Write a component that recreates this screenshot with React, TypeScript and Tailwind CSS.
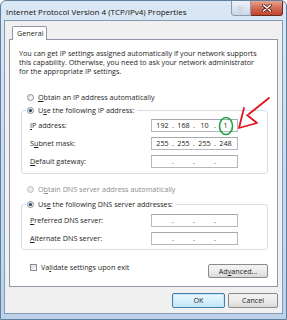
import React from "react";

const font = { fontFamily: '"Open Sans", "Noto Sans", "Liberation Sans", sans-serif' };

function Radio({ checked, disabled }: { checked?: boolean; disabled?: boolean }) {
  return (
    <span
      className={
        "inline-flex h-[7px] w-[7px] shrink-0 items-center justify-center rounded-full border bg-gradient-to-br " +
        (disabled ? "border-[#bcbcbc] from-[#f4f4f4] to-[#e6e6e6]" : "border-[#8a8c8f] from-[#e6e6e6] to-[#fbfbfb]")
      }
    >
      {checked && <span className="h-[3px] w-[3px] rounded-full bg-[#1d3c63]" />}
    </span>
  );
}

function IpBox({ value }: { value?: string[] }) {
  const parts = value ?? ["", "", "", ""];
  return (
    <div className="flex h-[13px] w-[87px] items-center border border-[#b3b9c1] border-t-[#a4a9b0] bg-white pl-[2px] text-[7.2px] leading-none text-[#222]">
      {parts.map((p, i) => (
        <React.Fragment key={i}>
          <span className="w-[17px] text-center">{p}</span>
          {i < 3 && <span className="w-[4px] text-center">.</span>}
        </React.Fragment>
      ))}
    </div>
  );
}

function Row({ label, u, rest, value }: { label: string; u: string; rest: string; value?: string[] }) {
  return (
    <div className="flex items-center pl-[2px]">
      <span className="w-[121px]">
        {label}
        <span className="underline decoration-[0.5px] underline-offset-[1px]">{u}</span>
        {rest}
      </span>
      <IpBox value={value} />
    </div>
  );
}

const U = ({ c }: { c: string }) => <span className="underline decoration-[0.5px] underline-offset-[1px]">{c}</span>;

export default function App() {
  return (
    <div
      className="relative flex h-[320px] w-[287px] flex-col overflow-hidden rounded-t-[6px] border border-[#60809f] bg-gradient-to-b from-[#dbe7f4] via-[#c9dbef] to-[#bcd2ea] px-[3px] pb-[5px] text-[7.2px] leading-[9px] text-[#1e1e1e]"
      style={font}
    >
      {/* title bar */}
      <div className="flex h-[19px] items-start justify-between">
        <div className="pl-[2px] pt-[6px] text-[8px] leading-[10px] text-[#111]">
          Internet Protocol Version 4 (TCP/IPv4) Properties
        </div>
        <div className="-mt-[1px] flex">
          <div className="flex h-[16px] w-[20px] items-center justify-center rounded-bl-[3px] border border-[#8b9bb0] bg-gradient-to-b from-[#eef3f9] to-[#c9d6e5] text-[8px] font-bold text-[#f7f9fc] [text-shadow:0_0_1px_#5a6a80]">
            ?
          </div>
          <div className="flex h-[16px] w-[32px] items-center justify-center rounded-br-[3px] border border-l-0 border-[#6b2a20] bg-gradient-to-b from-[#e9a393] via-[#d26a55] to-[#c2432c]">
            <svg width="10" height="8" viewBox="0 0 10 8">
              <path d="M1.5 1 L8.5 7 M8.5 1 L1.5 7" stroke="#4a1a12" strokeWidth="3" strokeLinecap="round" />
              <path d="M1.5 1 L8.5 7 M8.5 1 L1.5 7" stroke="#ffffff" strokeWidth="1.6" strokeLinecap="round" />
            </svg>
          </div>
        </div>
      </div>

      {/* client area */}
      <div className="flex flex-1 flex-col border border-[#8399b3] bg-[#f0f0f0] px-[4px] pb-[5px] pt-[5px]">
        <div className="flex h-[13px] pl-[3px]">
          <div className="relative z-10 h-[14px] w-[35px] rounded-t-[2px] border border-b-0 border-[#8e97a3] bg-white pl-[4px] pt-[2px] leading-[9px]">
            General
          </div>
        </div>
        <div className="flex flex-1 flex-col border border-[#8e97a3] bg-white px-[9px] pt-[9px]">
          <p>
            You can get IP settings assigned automatically if your network supports
            <br />
            this capability. Otherwise, you need to ask your network administrator
            <br />
            for the appropriate IP settings.
          </p>

          <div className="mt-[16px] flex h-[10px] items-center gap-[4px] pl-[8px]">
            <Radio />
            <span>
              <U c="O" />btain an IP address automatically
            </span>
          </div>

          <fieldset className="ml-[2px] mt-[3px] rounded-[3px] border border-[#d5dde6] pb-[5px] pl-[4px] pr-[4px]">
            <legend className="px-[1px]">
              <span className="flex h-[10px] items-center gap-[4px] pr-[2px]">
                <Radio checked />
                <span>
                  U<U c="s" />e the following IP address:
                </span>
              </span>
            </legend>
            <div className="ml-[2px] flex flex-col gap-[5px] pt-[4px]">
              <Row label="" u="I" rest="P address:" value={["192", "168", "10", "1"]} />
              <Row label="S" u="u" rest="bnet mask:" value={["255", "255", "255", "248"]} />
              <Row label="" u="D" rest="efault gateway:" />
            </div>
          </fieldset>

          <div className="mt-[10px] flex h-[10px] items-center gap-[4px] pl-[8px] text-[#8d8d8d]">
            <Radio disabled />
            <span>
              O<U c="b" />tain DNS server address automatically
            </span>
          </div>

          <fieldset className="ml-[2px] mt-[5px] rounded-[3px] border border-[#d5dde6] pb-[4px] pl-[4px] pr-[4px]">
            <legend className="px-[1px]">
              <span className="flex h-[10px] items-center gap-[4px] pr-[2px]">
                <Radio checked />
                <span>
                  Us<U c="e" /> the following DNS server addresses:
                </span>
              </span>
            </legend>
            <div className="ml-[2px] flex flex-col gap-[5px] pt-[5px]">
              <Row label="" u="P" rest="referred DNS server:" />
              <Row label="" u="A" rest="lternate DNS server:" />
            </div>
          </fieldset>

          <div className="ml-[2px] mt-[13px] flex items-start justify-between">
            <div className="flex h-[8px] items-center gap-[4px] pl-[9px]">
              <span className="h-[7px] w-[7px] border border-[#8a8c8f] bg-gradient-to-br from-[#dcdcdc] to-[#fafafa]" />
              <span>
                Va<U c="l" />idate settings upon exit
              </span>
            </div>
            <button className="mt-[1px] flex h-[14px] w-[60px] items-center justify-center rounded-[2px] border border-[#8a8a8a] bg-gradient-to-b from-[#f3f3f3] via-[#ebebeb] to-[#d9d9d9]">
              Ad<U c="v" />anced...
            </button>
          </div>
        </div>

        <div className="mt-[6px] flex justify-end gap-[3px]">
          <button className="flex h-[15px] w-[53px] items-center justify-center rounded-[2px] border border-[#3c7fb1] bg-gradient-to-b from-[#eaf6fd] via-[#d9f0fc] to-[#bee6fd] shadow-[inset_0_0_0_1px_#c8e6f8]">
            OK
          </button>
          <button className="flex h-[15px] w-[50px] items-center justify-center rounded-[2px] border border-[#8a8a8a] bg-gradient-to-b from-[#f3f3f3] via-[#ebebeb] to-[#d9d9d9]">
            Cancel
          </button>
        </div>
      </div>

      {/* hand-drawn annotation */}
      <svg className="pointer-events-none absolute left-0 top-0" width="287" height="320" viewBox="0 0 287 320">
        <ellipse cx="225" cy="125" rx="6.5" ry="8.5" fill="none" stroke="#1ea53c" strokeWidth="1.6" />
        <path d="M268 97 L248 113 M243 107 L238 127 L256 122 L246 114" fill="none" stroke="#e3141b" strokeWidth="1.8" strokeLinecap="round" strokeLinejoin="round" />
      </svg>
    </div>
  );
}
